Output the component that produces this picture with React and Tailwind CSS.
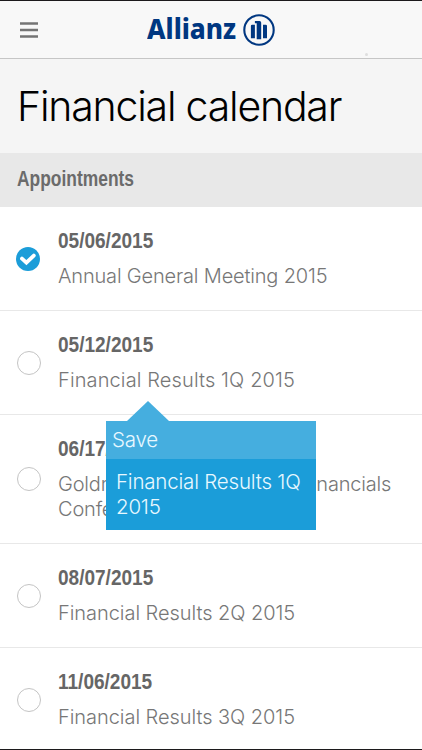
const appointments = [
  { date: "05/06/2015", title: "Annual General Meeting 2015", checked: true, tracking: "tracking-[-0.17px]" },
  { date: "05/12/2015", title: "Financial Results 1Q 2015", tracking: "tracking-[0.12px]" },
  {
    date: "06/17/2015",
    title: "Goldman Sachs European Financials Conference",
    tall: true,
    tracking: "tracking-[-0.18px]",
  },
  { date: "08/07/2015", title: "Financial Results 2Q 2015", tracking: "tracking-[-0.05px]" },
  { date: "11/06/2015", title: "Financial Results 3Q 2015", tracking: "tracking-[-0.05px]" },
];

function MenuIcon() {
  return (
    <svg viewBox="0 0 18 16" className="h-4 w-[18px] shrink-0">
      <path d="M0 1.6H18M0 8H18M0 14.4H18" stroke="#747474" strokeWidth="2.5" />
    </svg>
  );
}

function Logo() {
  return (
    <div className="flex h-8 w-[128px] items-center text-[#003781]">
      <span className="w-[96px] shrink-0">
        <span className="block origin-left scale-x-[0.935] pb-[3px] whitespace-nowrap font-['Noto_Sans','Open_Sans',sans-serif] text-[28px] leading-[29px] font-extrabold">
          Allianz
        </span>
      </span>
      <svg viewBox="0 0 32 32" className="size-8 shrink-0" fill="none">
        <circle cx="16" cy="16" r="14.7" stroke="currentColor" strokeWidth="2.1" />
        <path
          fill="currentColor"
          d="M11.9 24.3H7.9V12q0-1.3 1.3-1.3h2.7zM18.2 25.3h-4.5V9.2h-1.8V7.1h4.7q1.6 0 1.6 1.6zM20 24.3V10.7h2.7q1.3 0 1.3 1.3v12.3z"
        />
      </svg>
    </div>
  );
}

function Marker({ checked }) {
  if (!checked) {
    return <span className="ml-[17px] block size-6 rounded-full border border-[#c4c4c4] bg-white" />;
  }
  return (
    <span className="ml-4 flex size-6 items-center justify-center rounded-full bg-[#1b9dd9]">
      <svg viewBox="0 0 24 24" className="size-6" fill="none" stroke="white" strokeWidth="3.8">
        <path d="M6 11.6 10.4 15.6 17.8 8.6" strokeLinecap="round" />
      </svg>
    </span>
  );
}

function Popover() {
  return (
    <div className="absolute top-[400px] left-[106px] w-[210px] text-[20.5px] font-light tracking-[-0.2px] text-[#e8f8ff]">
      <svg viewBox="0 0 42 20" className="ml-[21px] block h-5 w-[42px]">
        <path d="M0 20 21 0 42 20z" fill="#45aedf" />
      </svg>
      <div className="h-[38px] bg-[#45aedf] pl-1.5 leading-[38px]">Save</div>
      <div className="h-[71px] bg-[#1b9dd9] pt-2.5 pl-2.5 leading-[25px]">
        Financial Results 1Q
        <br />
        2015
      </div>
    </div>
  );
}

export default function App() {
  return (
    <div className="relative flex h-[750px] w-[422px] flex-col overflow-hidden border-y border-[#1c1a1c] bg-white font-['Inter','Liberation_Sans',sans-serif]">
      <header className="flex h-[58px] shrink-0 items-center border-b border-[#c6c6c6] bg-[#f8f8f8] pl-5">
        <MenuIcon />
        <div className="ml-[109px]">
          <Logo />
        </div>
        <span className="mb-0.5 ml-[90px] size-[3px] self-end rounded-full bg-[#dedede]" />
      </header>
      <section className="flex h-[94px] shrink-0 items-center bg-[#f5f5f5] pl-[17px]">
        <h1 className="whitespace-nowrap text-[41px] leading-[50px] font-light tracking-[-1.2px] text-black">
          Financial calendar
        </h1>
      </section>
      <h2 className="h-[54px] shrink-0 bg-[#e8e8e8] pl-[17px] font-['Liberation_Sans',sans-serif] text-[21.5px] leading-[53px] font-bold text-[#6b6b6b]">
        <span className="inline-block origin-left scale-x-[0.81]">Appointments</span>
      </h2>
      <ul>
        {appointments.map(({ date, title, checked, tall, tracking }) => (
          <li
            key={date}
            className={`flex items-center border-b border-[#e8e8e8] ${tall ? "h-[129px]" : "h-[104px]"}`}
          >
            <div className="w-[58px] shrink-0">
              <Marker checked={checked} />
            </div>
            <div>
              <p className="font-['Liberation_Sans',sans-serif] text-[21.5px] leading-6 font-bold text-[#666]">
                <span className="inline-block origin-left scale-x-[0.885]">{date}</span>
              </p>
              <p className={`mt-[11px] w-[350px] text-[20px] leading-[25px] font-light text-[#777] ${tracking}`}>
                {title}
              </p>
            </div>
          </li>
        ))}
      </ul>
      <Popover />
    </div>
  );
}
